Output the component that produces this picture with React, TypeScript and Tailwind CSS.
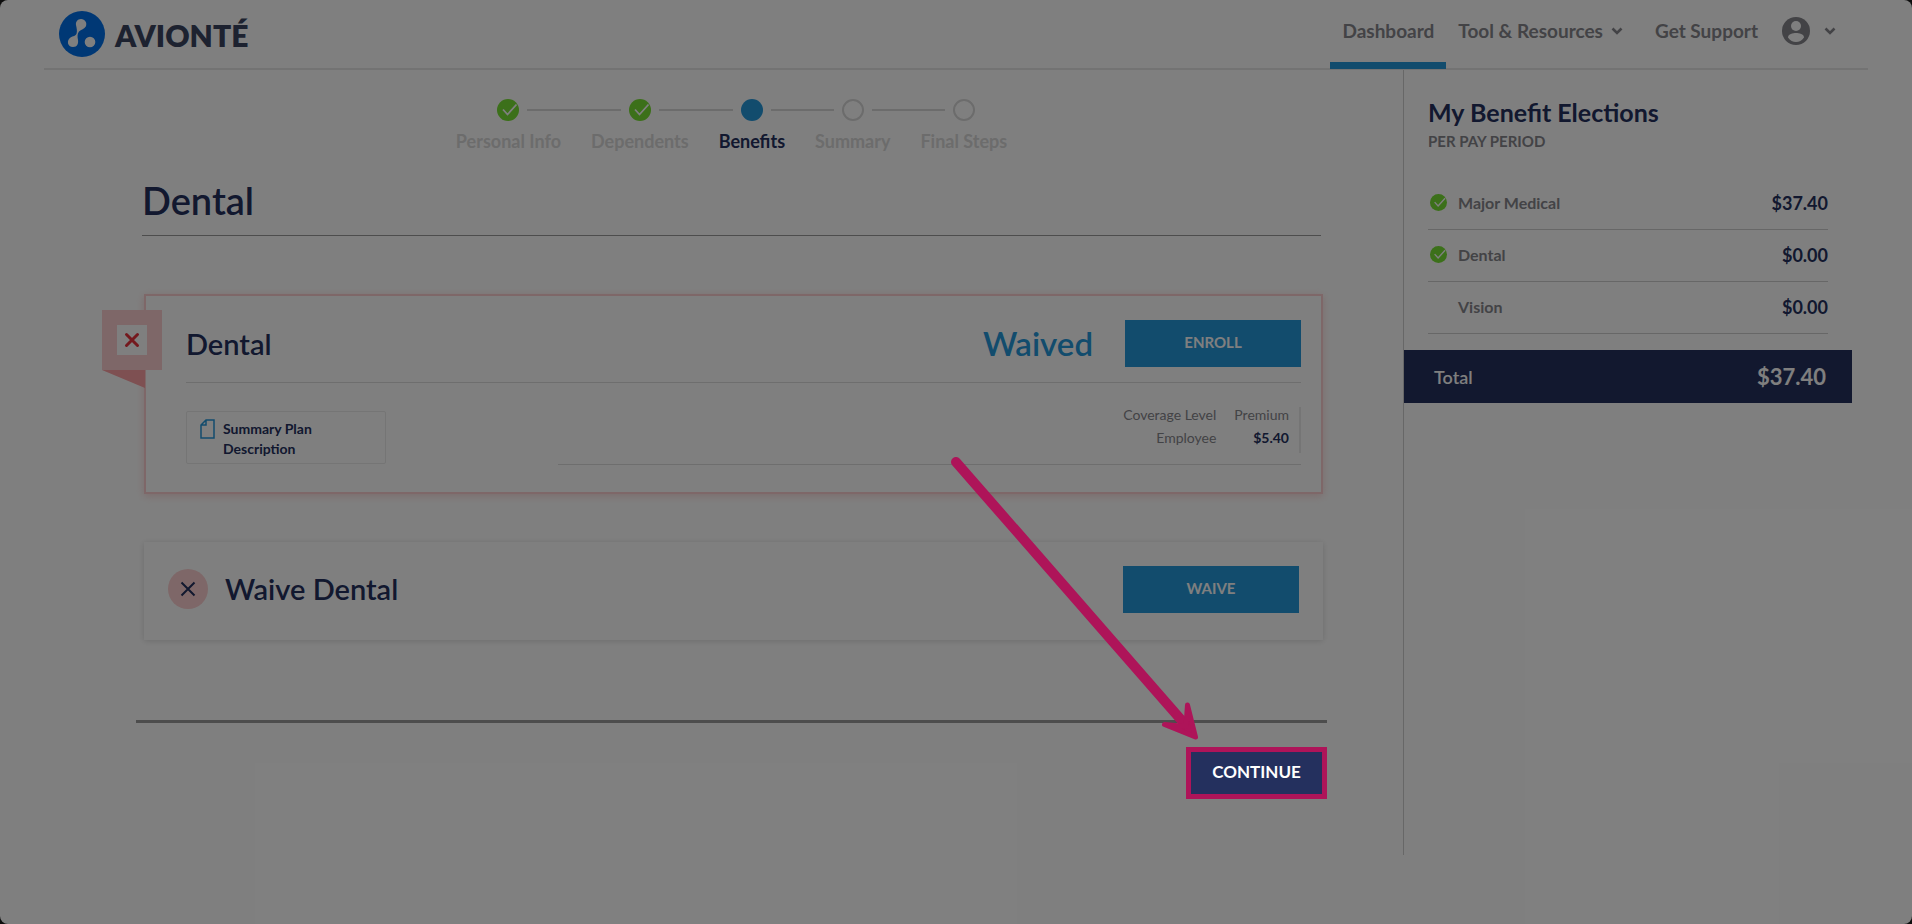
import React from "react";

interface Step {
  label: string;
  state: "done" | "current" | "todo";
}

interface Election {
  name: string;
  amount: string;
  done: boolean;
}

const STEPS: Step[] = [
  { label: "Personal Info", state: "done" },
  { label: "Dependents", state: "done" },
  { label: "Benefits", state: "current" },
  { label: "Summary", state: "todo" },
  { label: "Final Steps", state: "todo" }
];

const ELECTIONS: Election[] = [
  { name: "Major Medical", amount: "$37.40", done: true },
  { name: "Dental", amount: "$0.00", done: true },
  { name: "Vision", amount: "$0.00", done: false }
];

const CheckCircle: React.FC<{ className: string }> = ({ className }) => (
  <svg viewBox="0 0 22 22" className={className} aria-hidden="true">
    <circle cx="11" cy="11" r="11" fill="#78e034" />
    <path d="M6 10.5 10.5 15.5 19.5 5.5" fill="none" stroke="#fff" strokeWidth="1.8" />
  </svg>
);

const ChevronDown: React.FC = () => (
  <svg viewBox="0 0 12 8" className="h-2 w-3" aria-hidden="true">
    <path d="M1.5 1.5 6 6 10.5 1.5" fill="none" stroke="#86868c" strokeWidth="2.6" />
  </svg>
);

const Logo: React.FC = () => (
  <a href="#home" className="flex items-center gap-[10px]">
    <svg viewBox="0 0 46 46" className="size-[46px]" aria-hidden="true">
      <circle cx="23" cy="23" r="23" fill="#0070ea" />
      <path
        d="M22 8C18.5 8 16.5 11 17 14C17.8 17.5 18.3 20 17.6 22.5C16.8 25 14 25 11.5 26.5C7.2 29.5 8.5 36 14 36C18.5 36 19.5 32.5 19 29C18.3 25.5 18.3 22.5 20 20.5C22 18.5 25.5 18 26.8 15.5C28.5 12 26 8 22 8Z"
        fill="#fff"
      />
      <circle cx="31" cy="31" r="5.3" fill="#fff" />
    </svg>
    <span className="pt-[2px] text-[30px] leading-8 font-extrabold text-[#3a4560]">AVIONTÉ</span>
  </a>
);

const Header: React.FC = () => (
  <header className="mx-11 flex h-[70px] justify-between border-b-2 border-[#e6e6e6] pr-8 pl-[15px]">
    <Logo />
    <nav className="flex pb-[6px] text-[19px] font-bold text-[#86868c]">
      <a
        href="#dashboard"
        className="-mb-[7px] flex items-center border-b-[7px] border-[#2498db] px-3"
      >
        Dashboard
      </a>
      <button type="button" className="ml-3 flex items-center gap-2">
        Tool &amp; Resources
        <ChevronDown />
      </button>
      <a href="#support" className="ml-8 flex items-center">
        Get Support
      </a>
      <button type="button" aria-label="Account" className="ml-6 flex items-center gap-[14px]">
        <svg viewBox="0 0 28 28" className="size-7" aria-hidden="true">
          <circle cx="14" cy="14" r="14" fill="#86868c" />
          <circle cx="14" cy="9" r="5" fill="#fff" />
          <path d="M6 20.5C6 17 11 16 14 16s8 1 8 4.5C20 23.5 17 25 14 25s-6-1.5-8-4.5Z" fill="#fff" />
        </svg>
        <ChevronDown />
      </button>
    </nav>
  </header>
);

const StepDot: React.FC<{ state: Step["state"] }> = ({ state }) => {
  if (state === "done") return <CheckCircle className="size-[22px]" />;
  if (state === "current") return <span className="size-[22px] rounded-full bg-[#2498db]" />;
  return <span className="size-[22px] rounded-full border-2 border-[#d8d8d8]" />;
};

const Stepper: React.FC = () => (
  <ol className="flex justify-center">
    {STEPS.map((step, i) => (
      <li key={step.label}>
        <div className="flex items-center gap-2">
          <span className={`h-[2px] flex-1 ${i === 0 ? "" : "bg-[#d8d8d8]"}`} />
          <StepDot state={step.state} />
          <span className={`h-[2px] flex-1 ${i === STEPS.length - 1 ? "" : "bg-[#d8d8d8]"}`} />
        </div>
        <div
          className={`mt-2 px-[15px] text-lg leading-6 font-bold ${
            step.state === "current" ? "text-[#24305e]" : "text-[#d8d8d8]"
          }`}
        >
          {step.label}
        </div>
      </li>
    ))}
  </ol>
);

const PlanCard: React.FC = () => (
  <section className="relative mr-1 ml-2 mt-[58px] h-[200px] border-2 border-[#fccfd0] pt-6 pr-5 pl-10 shadow-[0_2px_8px_rgba(240,150,150,0.4)]">
    {/* Waived ribbon, folded over the card's left edge */}
    <div className="absolute top-[14px] -left-11">
      <div className="flex size-[60px] items-center justify-center bg-[#fccfd0]">
        <div className="flex size-[30px] items-center justify-center bg-white">
          <svg viewBox="0 0 16 16" className="size-4" aria-hidden="true">
            <path d="M2.5 2.5 13.5 13.5M13.5 2.5 2.5 13.5" stroke="#e8323c" strokeWidth="3" strokeLinecap="round" />
          </svg>
        </div>
      </div>
      <svg viewBox="0 0 43 18" className="h-[18px] w-[43px]" aria-hidden="true">
        <path d="M0 0H43V18Z" fill="#fca0a4" />
      </svg>
    </div>

    <div className="flex h-[63px] items-start border-b border-[#dcdcdc]">
      <h2 className="flex-1 text-[29px] leading-[48px] font-semibold text-[#24305e]">Dental</h2>
      <span className="mr-8 text-[33px] leading-[47px] font-semibold text-[#2498db]">Waived</span>
      <button type="button" className="h-[47px] w-44 bg-[#2498db] pb-[2px] text-[15px] font-bold text-white">
        ENROLL
      </button>
    </div>

    <div className="flex items-start justify-between">
      <a
        href="#summary"
        className="mt-7 flex h-[53px] w-[200px] gap-2 rounded-xs border border-[#ebebeb] pt-[7px] pl-[13px] text-sm leading-5 font-bold text-[#24305e]"
      >
        <svg viewBox="0 0 15 20" className="h-5 w-[15px]" aria-hidden="true">
          <path d="M6 1H14V19H1V6Z M6 1V6H1" fill="none" stroke="#2498db" strokeWidth="1.5" />
        </svg>
        <span className="w-28">Summary Plan Description</span>
      </a>
      <div className="flex h-[82px] w-2/3 items-start justify-end border-b border-[#dcdcdc] pt-6">
        <table className="border-r-2 border-[#ebebeb] text-right text-sm leading-4 text-[#86868c]">
          <thead>
            <tr>
              <th className="pr-[18px] pb-[7px] font-normal">Coverage Level</th>
              <th className="pr-[10px] pb-[7px] font-normal">Premium</th>
            </tr>
          </thead>
          <tbody>
            <tr>
              <td className="pr-[18px] pb-[7px]">Employee</td>
              <td className="pr-[10px] pb-[7px] font-bold text-[#24305e]">$5.40</td>
            </tr>
          </tbody>
        </table>
      </div>
    </div>
  </section>
);

const WaiveCard: React.FC = () => (
  <section className="mr-1 ml-2 mt-12 flex h-[98px] items-center px-6 pb-1 shadow-[0_1px_6px_rgba(0,0,0,0.15)]">
    <span className="flex size-10 items-center justify-center rounded-full bg-[#fccfd0]">
      <svg viewBox="0 0 16 16" className="size-4" aria-hidden="true">
        <path d="M1.5 1.5 14.5 14.5M14.5 1.5 1.5 14.5" stroke="#24305e" strokeWidth="2" />
      </svg>
    </span>
    <h2 className="ml-[17px] flex-1 text-[29px] font-semibold text-[#24305e]">Waive Dental</h2>
    <button type="button" className="h-[47px] w-44 bg-[#2498db] pb-[2px] text-[15px] font-bold text-white">
      WAIVE
    </button>
  </section>
);

const ContinueCallout: React.FC = () => (
  <div className="relative z-20">
    <svg
      viewBox="0 0 250 287"
      className="pointer-events-none absolute right-[127px] bottom-[57px] h-[287px] w-[250px]"
      aria-hidden="true"
    >
      <path d="M6 7 240 275" stroke="#ae1459" strokeWidth="10" strokeLinecap="round" />
      <path
        d="M237.5 250 245.5 282 214.5 269.5 236 271.5Z"
        fill="#ae1459"
        stroke="#ae1459"
        strokeWidth="5"
        strokeLinejoin="round"
      />
    </svg>
    <button
      type="button"
      className="h-[52px] w-[141px] border-[5px] border-[#ae1459] bg-[#24305e] pb-[2px] text-[17px] font-bold text-white"
    >
      CONTINUE
    </button>
  </div>
);

const Elections: React.FC = () => (
  <aside className="mr-[60px] w-[448px]">
    <div className="px-6 pt-[26px]">
      <h2 className="text-[25px] leading-8 font-bold text-[#24305e]">My Benefit Elections</h2>
      <p className="pt-[3px] text-[15px] leading-5 font-bold text-[#86868c]">PER PAY PERIOD</p>
      <ul className="mt-[27px]">
        {ELECTIONS.map((item) => (
          <li key={item.name} className="flex h-[52px] items-center border-b border-[#cfcfcf] pb-[2px]">
            <span className="w-[30px] pl-[2px]">
              {item.done && <CheckCircle className="size-[17px]" />}
            </span>
            <span className="flex-1 text-base font-bold text-[#86868c]">{item.name}</span>
            <span className="text-lg font-bold text-[#24305e]">{item.amount}</span>
          </li>
        ))}
      </ul>
    </div>
    <div className="mt-4 flex h-[53px] items-center justify-between bg-[#24305e] pr-[26px] pl-[30px] text-white">
      <span className="text-lg font-semibold">Total</span>
      <span className="text-[22px] font-bold">$37.40</span>
    </div>
  </aside>
);

const App: React.FC = () => (
  <div className="relative min-h-screen bg-[#1c1c1c] font-[Lato,sans-serif]">
    <div className="min-h-screen rounded-lg bg-white">
      <Header />
      <div className="flex">
        <main className="flex-1 border-r border-[#cfcfcf] pt-[29px] pr-[76px] pb-14 pl-[136px]">
          <Stepper />
          <h1 className="mx-[6px] mt-[22px] border-b border-[#9a9a9a] pb-[10px] text-[38px] leading-[50px] font-semibold text-[#24305e]">
            Dental
          </h1>
          <PlanCard />
          <WaiveCard />
          <div className="mt-20 flex justify-end border-t-[3px] border-[#9a9a9a] pt-6">
            <ContinueCallout />
          </div>
        </main>
        <Elections />
      </div>
    </div>
    {/* Dim everything except the highlighted step */}
    <div className="pointer-events-none absolute inset-0 z-10 bg-black/50" />
  </div>
);

export default App;
